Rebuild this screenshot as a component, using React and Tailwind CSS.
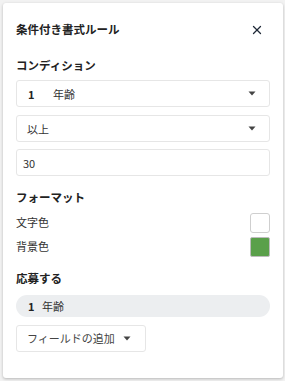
import { X } from "lucide-react";

const Caret = () => (
  <svg width="8" height="5" viewBox="0 0 8 5" className="text-[#444]">
    <path d="M0.5 0.5h7L4 4.5z" fill="currentColor" />
  </svg>
);

const Label = ({ children, className = "" }) => (
  <div className={`text-[11.5px] font-bold text-[#222] ${className}`}>{children}</div>
);

export default function App() {
  return (
    <div className="h-[381px] w-[285px] bg-[#f2f2f2] p-[3px] pr-[2px] font-['Noto_Sans_CJK_JP','Noto_Sans',sans-serif] text-[#333]">
      <div className="flex h-[375px] flex-col rounded-[3px] bg-white px-[13px] shadow-[0_1px_3px_rgba(0,0,0,0.25)]">
        {/* Header */}
        <div className="flex h-[54px] items-center justify-between">
          <div className="text-[11.5px] font-bold text-[#222]">条件付き書式ルール</div>
          <X size={14} strokeWidth={2.2} className="mr-[6px] text-[#1f2937]" />
        </div>

        <Label className="mt-[0px]">コンディション</Label>

        <div className="mt-[6px] flex h-[27px] items-center justify-between rounded-[3px] border border-[#e6e6e6] pl-[11px] pr-[13px]">
          <div className="flex items-center text-[11px]">
            <span className="w-[25px] font-bold text-[#222]">1</span>
            <span>年齢</span>
          </div>
          <Caret />
        </div>

        <div className="mt-[8px] flex h-[27px] items-center justify-between rounded-[3px] border border-[#e6e6e6] pl-[10px] pr-[13px]">
          <span className="text-[11px]">以上</span>
          <Caret />
        </div>

        <div className="mt-[7px] flex h-[27px] items-center rounded-[3px] border border-[#e6e6e6] pl-[6px]">
          <span className="text-[11px]">30</span>
        </div>

        <Label className="mt-[13px]">フォーマット</Label>

        <div className="mt-[6px] flex items-center justify-between">
          <span className="text-[11px]">文字色</span>
          <div className="h-[20px] w-[20px] rounded-[3px] border border-[#cfcfcf] bg-white" />
        </div>
        <div className="mt-[4px] flex items-center justify-between">
          <span className="text-[11px]">背景色</span>
          <div className="h-[20px] w-[20px] rounded-[2px] border border-[#bdbdbd] bg-[#5aa04a]" />
        </div>

        <Label className="mt-[13px]">応募する</Label>

        <div className="mt-[8px] flex h-[22px] items-center rounded-full bg-[#eceef0] px-[12px] text-[11px]">
          <span className="w-[14px] font-bold text-[#222]">1</span>
          <span>年齢</span>
        </div>

        <div className="mt-[8px] flex h-[27px] w-[130px] items-center gap-[8px] rounded-[3px] border border-[#e6e6e6] pl-[10px] text-[11px] text-[#444]">
          <span>フィールドの追加</span>
          <Caret />
        </div>
      </div>
    </div>
  );
}
